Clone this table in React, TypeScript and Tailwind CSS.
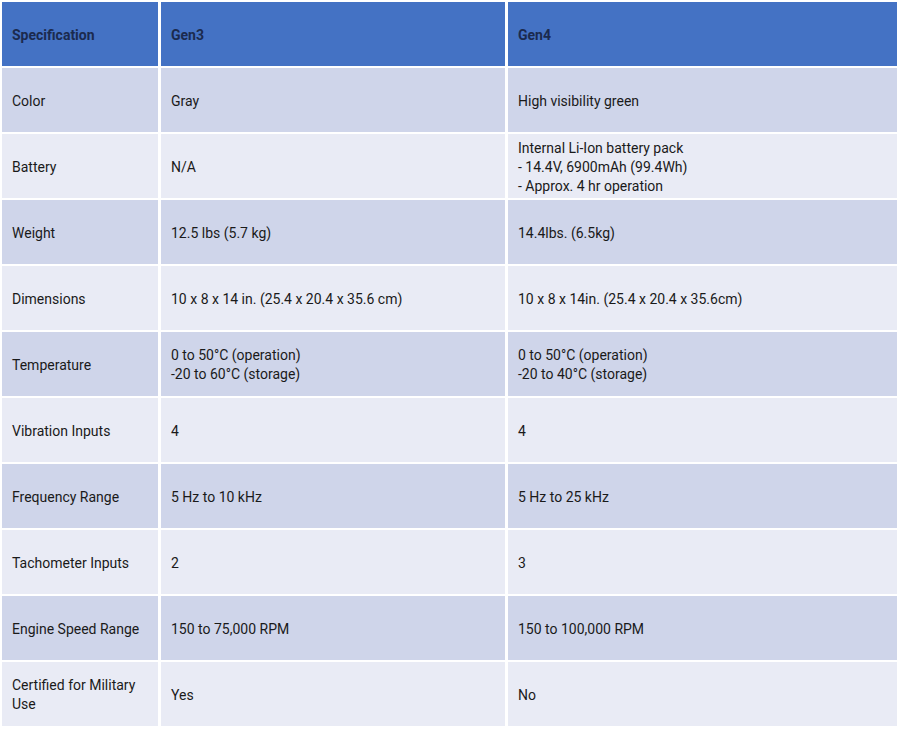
import React from "react";

const rows: [string, string, string][] = [
  ["Color", "Gray", "High visibility green"],
  ["Battery", "N/A", "Internal Li-Ion battery pack\n- 14.4V, 6900mAh (99.4Wh)\n- Approx. 4 hr operation"],
  ["Weight", "12.5 lbs (5.7 kg)", "14.4lbs. (6.5kg)"],
  ["Dimensions", "10 x 8 x 14 in. (25.4 x 20.4 x 35.6 cm)", "10 x 8 x 14in. (25.4 x 20.4 x 35.6cm)"],
  ["Temperature", "0 to 50°C (operation)\n-20 to 60°C (storage)", "0 to 50°C (operation)\n-20 to 40°C (storage)"],
  ["Vibration Inputs", "4", "4"],
  ["Frequency Range", "5 Hz to 10 kHz", "5 Hz to 25 kHz"],
  ["Tachometer Inputs", "2", "3"],
  ["Engine Speed Range", "150 to 75,000 RPM", "150 to 100,000 RPM"],
  ["Certified for Military Use", "Yes", "No"],
];

function Cell({ text, bg, bold }: { text: string; bg: string; bold?: boolean }) {
  return (
    <div
      className={`${bg} h-[64px] flex items-center px-[10px] pt-[2px] text-[14px] leading-[19px] ${
        bold ? "font-bold text-[#1b2a4e]" : "text-[#1a1a1a]"
      } whitespace-pre-line`}
    >
      {text}
    </div>
  );
}

export default function App() {
  return (
    <div
      className="w-[901px] h-[731px] bg-white pt-[2px] pl-[2px]"
      style={{ fontFamily: "Roboto, 'Liberation Sans', sans-serif" }}
    >
      <div className="grid grid-cols-[156px_344px_389px] gap-x-[3px] gap-y-[2px]">
        <Cell text="Specification" bg="bg-[#4472c4]" bold />
        <Cell text="Gen3" bg="bg-[#4472c4]" bold />
        <Cell text="Gen4" bg="bg-[#4472c4]" bold />
        {rows.map((r, i) => {
          const bg = i % 2 === 0 ? "bg-[#cfd5ea]" : "bg-[#e9ebf5]";
          return (
            <React.Fragment key={i}>
              <Cell text={r[0]} bg={bg} />
              <Cell text={r[1]} bg={bg} />
              <Cell text={r[2]} bg={bg} />
            </React.Fragment>
          );
        })}
      </div>
    </div>
  );
}
